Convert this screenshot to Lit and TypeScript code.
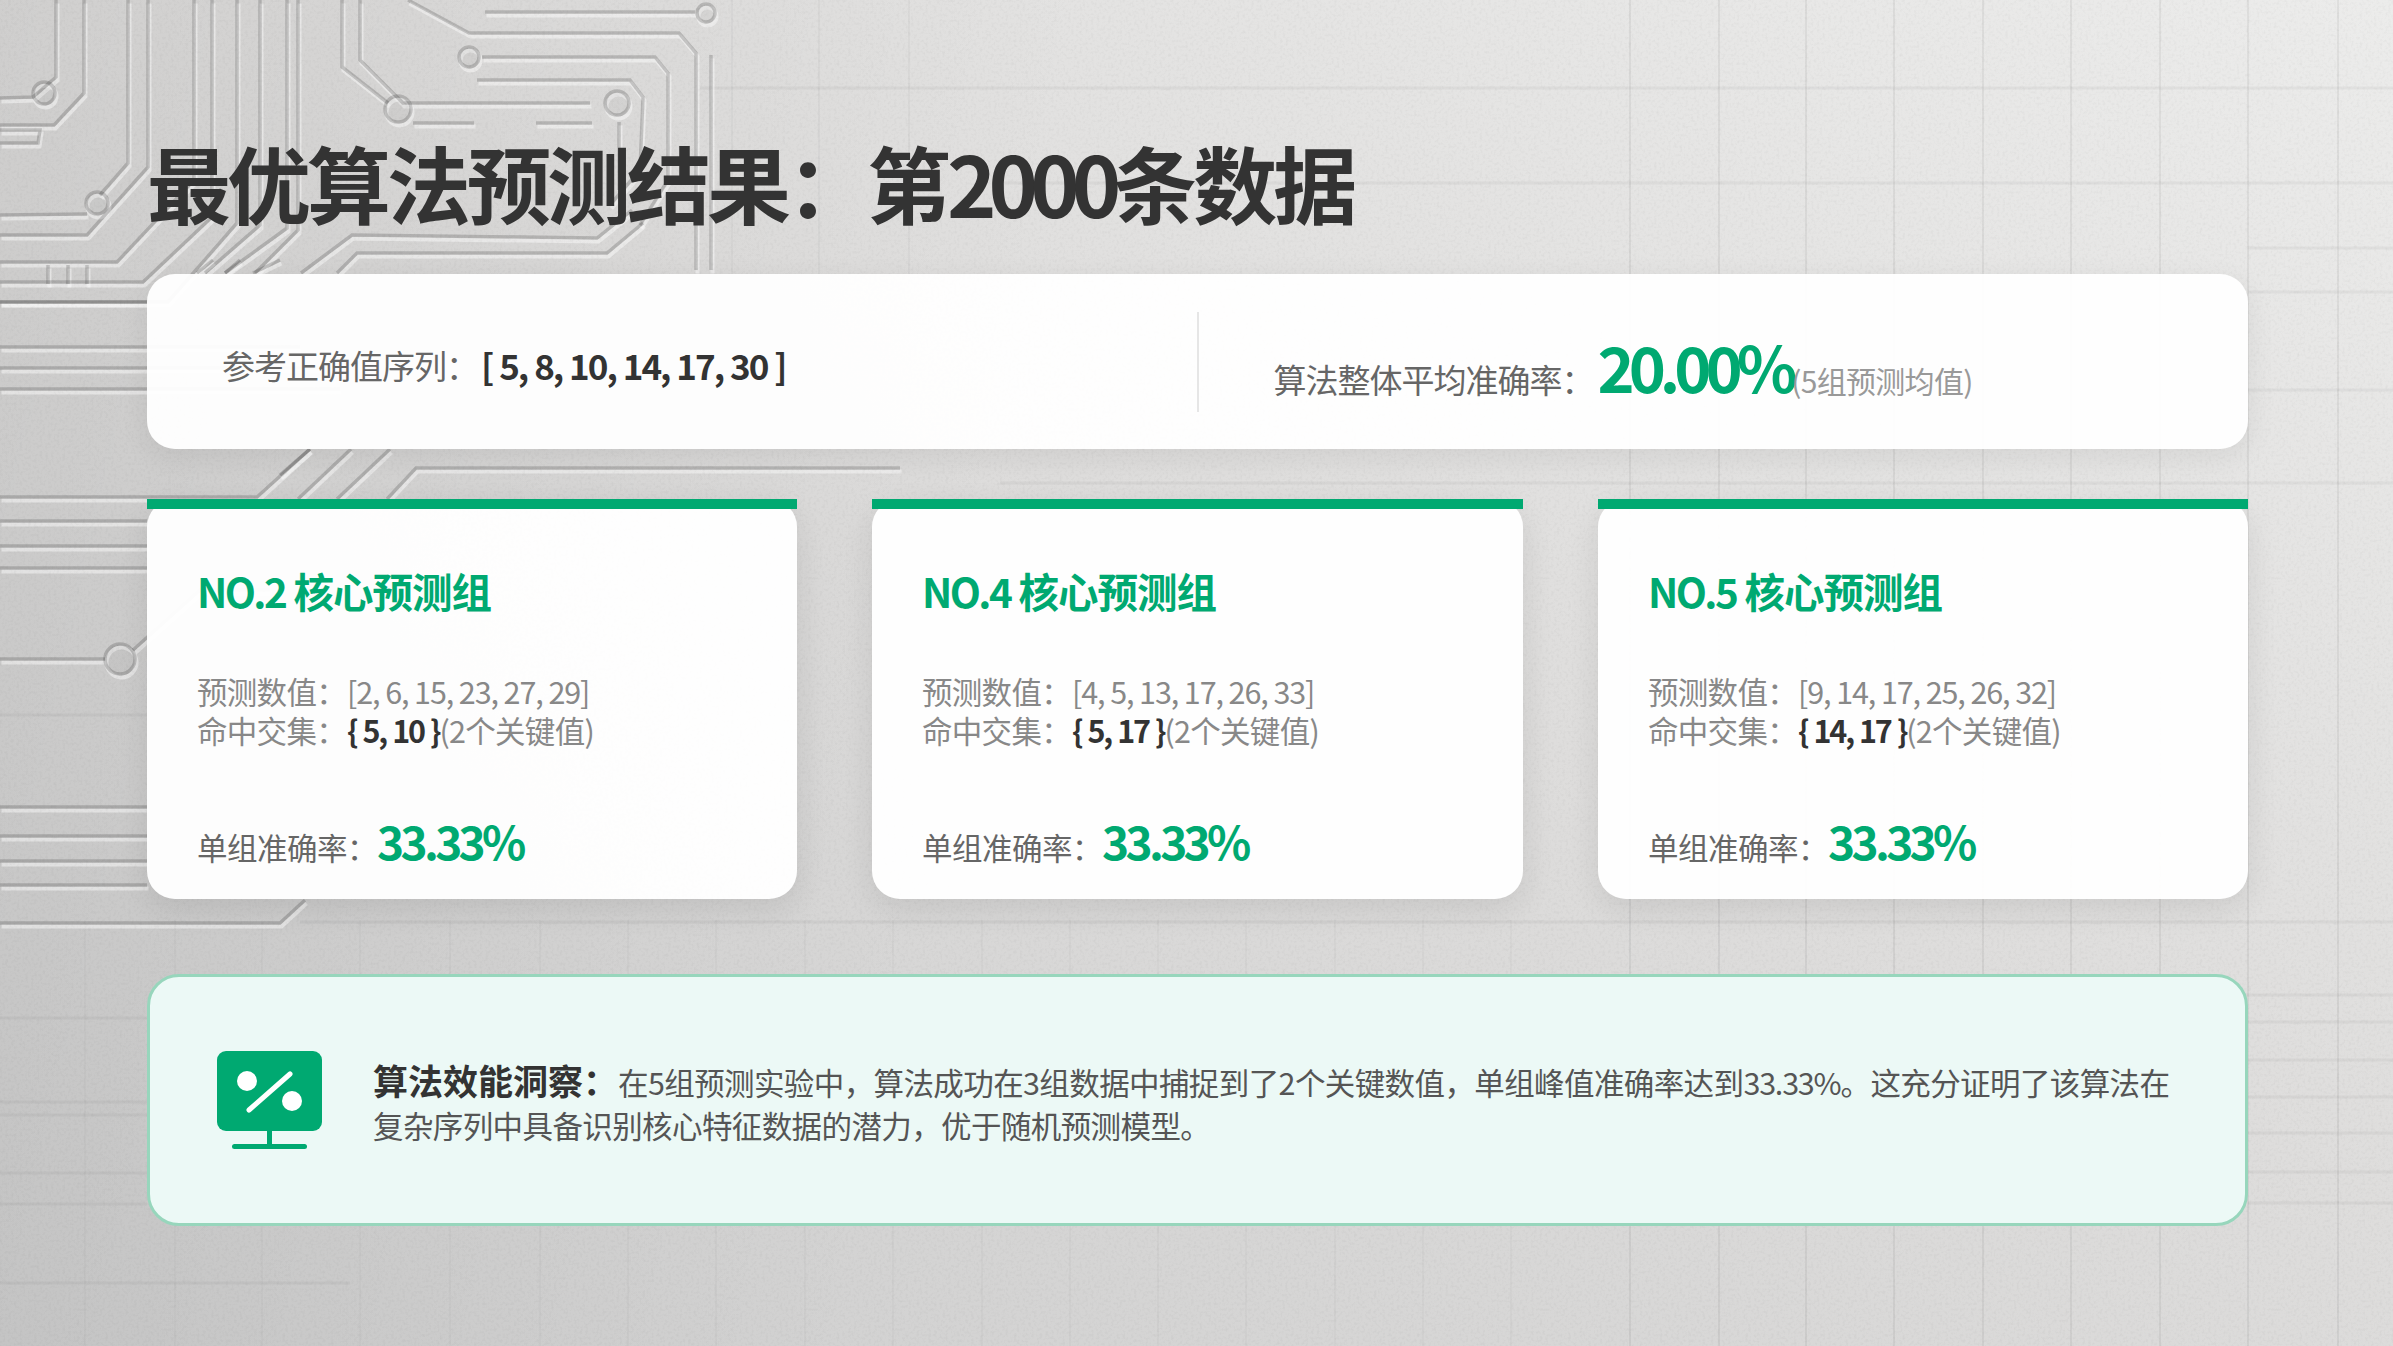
import { LitElement, html, css, svg } from "lit";
import { customElement } from "lit/decorators.js";

const traces: string[] = [
  "56,0 56,77 33,97 0,98", "84,0 84,93 54,125 0,125", "0,130 40,130 38,143 0,143",
  "128,0 128,163 100,195", "87,214 0,215", "148,0 148,167 87,235 0,235",
  "194,0 194,180 117,262 0,262", "212,0 212,217 143,282 0,282", "237,0 237,223 168,302 0,302",
  "260,0 260,225 205,273", "287,0 287,228 225,273", "298,0 298,230 255,273",
  "342,0 342,67 388,103", "360,0 360,60 403,103 590,103", "408,0 469,33 679,33 696,53 696,270",
  "485,12 695,12", "482,57 655,57 668,73 668,180 640,225", "477,80 630,80 643,97 640,170 610,205",
  "413,123 474,123", "536,123 592,123", "619,122 619,190",
  "301,273 352,235 597,238 632,210", "337,273 357,253 607,253 643,223", "711,55 711,270",
  "0,302 147,302", "0,347 300,347", "0,368 320,368", "0,389 340,389",
  "0,497 257,497 310,449", "0,521 147,521", "0,546 147,546", "0,568 147,568",
  "0,659 105,659", "133,650 200,590 270,590", "0,807 147,807", "0,836 147,836", "0,861 147,861", "0,885 147,885",
  "0,923 280,923 305,900", "280,475 310,449", "298,499 351,449", "337,499 390,449",
  "387,499 416,468 900,468", "197,273 213,260", "225,273 240,260", "253,273 280,260",
  "48,265 48,284", "68,265 68,284", "87,265 87,284",
];
const nodes: [number, number, number][] = [
  [44, 93, 11], [97, 203, 11], [398, 109, 13], [617, 103, 12], [469, 57, 10], [706, 13, 9], [120, 659, 15],
];
const strong: number[] = [1630, 1719, 1806, 1894, 1983, 2071, 2160, 2248, 2338];
const upper: number[] = [732, 819, 909];
const lower: number[] = [85, 175, 262, 360, 450, 540, 628, 716, 805, 893, 982, 1070, 1158, 1246, 1335, 1423, 1511];
const horizontal: [number, number, number][] = [
  [88, 700, 2393], [183, 1000, 2393], [248, 2248, 2393], [292, 2248, 2393], [390, 2248, 2393], [483, 1000, 2393],
  [715, 0, 147], [922, 300, 2393], [995, 1520, 2393], [1018, 0, 147], [1022, 2248, 2393], [1060, 2248, 2393],
  [1097, 2248, 2393], [1102, 0, 147], [1115, 0, 147], [1133, 2248, 2393], [1172, 2248, 2393], [1173, 0, 147],
  [1203, 2248, 2393], [1204, 0, 147], [1283, 0, 350],
];

const groups = [
  { no: "NO.2", pred: "[2, 6, 15, 23, 27, 29]", hit: "{ 5, 10 }" },
  { no: "NO.4", pred: "[4, 5, 13, 17, 26, 33]", hit: "{ 5, 17 }" },
  { no: "NO.5", pred: "[9, 14, 17, 25, 26, 32]", hit: "{ 14, 17 }" },
];

@customElement("app-root")
export class AppRoot extends LitElement {
  static styles = css`
    :host {
      display: block;
      position: relative;
      width: 2393px;
      height: 1346px;
      overflow: hidden;
      font-family: "Noto Sans CJK SC", "Noto Sans", sans-serif;
      background:
        linear-gradient(100deg, rgba(0, 0, 0, 0.06) 0%, rgba(0, 0, 0, 0) 42%),
        linear-gradient(to bottom left, #ececeb 0%, #dedddc 45%, #cdcdcd 100%);
    }
    .bg { position: absolute; inset: 0; width: 100%; height: 100%; }
    .page {
      position: relative;
      box-sizing: border-box;
      height: 100%;
      padding: 140px 145px 0 147px;
      display: flex;
      flex-direction: column;
    }
    h1 {
      margin: -4px 0 46px;
      font-size: 84px;
      line-height: 92px;
      font-weight: 700;
      letter-spacing: -4px;
      color: #333;
    }
    .tight { letter-spacing: -8px; }
    .summary {
      height: 175px;
      flex: none;
      display: grid;
      grid-template-columns: 1fr 1fr;
      align-items: center;
      background: rgba(255, 255, 255, 0.95);
      border-radius: 28px;
      box-shadow: 0 8px 30px rgba(0, 0, 0, 0.07);
      margin-bottom: 50px;
    }
    .cell { padding-left: 75px; display: flex; align-items: baseline; height: 100px; box-sizing: border-box; }
    .cell.left { align-items: center; padding-top: 6px; }
    .cell.right { border-left: 2px solid #e6e6e6; margin-left: -1px; padding-top: 16px; }
    .lab { font-size: 33px; letter-spacing: -1px; color: #666; }
    .seq { margin-left: 3px; font-size: 35px; font-weight: 700; letter-spacing: -2px; word-spacing: 1px; color: #333; white-space: pre; }
    .big { margin-left: 4px; font-size: 63px; font-weight: 700; letter-spacing: -6px; color: #00a971; line-height: 76px; }
    .note { font-size: 30px; letter-spacing: -0.7px; color: #999; }
    .cards {
      display: grid;
      grid-template-columns: 650px 651px 650px;
      justify-content: space-between;
      margin-bottom: 75px;
    }
    .card {
      position: relative;
      box-sizing: border-box;
      height: 400px;
      padding: 63px 50px 0;
      background: rgba(255, 255, 255, 0.96);
      border-radius: 28px;
      box-shadow: 0 10px 32px rgba(0, 0, 0, 0.09);
    }
    .card::before {
      content: "";
      position: absolute;
      left: 0; right: 0; top: 0;
      height: 10px;
      background: #00a971;
    }
    .name { font-size: 40.5px; line-height: 58px; font-weight: 700; letter-spacing: -1px; color: #00a971; }
    .name span { letter-spacing: -2.6px; }
    .vals { margin-top: 52px; font-size: 30.5px; line-height: 39px; letter-spacing: -0.7px; color: #888; }
    .vals i { font-style: normal; letter-spacing: -1.1px; margin-left: 1px; }
    .vals b { color: #333; font-weight: 700; letter-spacing: -2.2px; word-spacing: 1.5px; margin-left: 1px; }
    .rate { margin-top: 60px; display: flex; align-items: baseline; }
    .rate span { font-size: 30.5px; letter-spacing: -0.5px; color: #666; }
    .rate strong { font-size: 46px; font-weight: 700; letter-spacing: -3.7px; color: #00a971; line-height: 60px; }
    .insight {
      box-sizing: border-box;
      height: 252px;
      display: flex;
      align-items: center;
      gap: 51px;
      padding: 0 67px;
      background: #ecf9f6;
      border: 3px solid #97d6bc;
      border-radius: 32px;
    }
    .insight svg { flex: none; width: 105px; height: 98px; }
    .text { padding-top: 5px; font-size: 30.5px; line-height: 43px; letter-spacing: -0.6px; color: #555; }
    .text b { font-size: 35px; font-weight: 700; letter-spacing: 0; color: #333; }
    .text i { font-style: normal; letter-spacing: -1.2px; }
  `;

  render() {
    return html`
      <svg class="bg" viewBox="0 0 2393 1346" aria-hidden="true">
        <defs>
          <filter id="grain" x="0" y="0" width="100%" height="100%">
            <feTurbulence type="fractalNoise" baseFrequency="0.35" numOctaves="2" seed="4" />
            <feColorMatrix values="0 0 0 0 0  0 0 0 0 0  0 0 0 0 0  1.4 0 0 0 -0.6" />
          </filter>
          <filter id="soft"><feGaussianBlur stdDeviation="0.7" /></filter>
        </defs>
        ${strong.map((x) => svg`<line x1=${x} x2=${x} y1="0" y2="1346" stroke="#000" stroke-opacity="0.075" stroke-width="1.5" />`)}
        ${upper.map((x) => svg`<line x1=${x} x2=${x} y1="0" y2="275" stroke="#000" stroke-opacity="0.04" stroke-width="1.5" />`)}
        ${lower.map((x) => svg`<line x1=${x} x2=${x} y1="920" y2="1346" stroke="#000" stroke-opacity="0.02" stroke-width="2" />`)}
        ${horizontal.map(([y, a, b]) => svg`<line x1=${a} x2=${b} y1=${y} y2=${y} stroke="#000" stroke-opacity="0.04" stroke-width="3" />`)}
        <g filter="url(#soft)">
          <g fill="none" stroke="#fff" stroke-opacity="0.45" stroke-width="4" transform="translate(1.5 3.5)">
            ${traces.map((p) => svg`<polyline points=${p} />`)}
            ${nodes.map(([x, y, r]) => svg`<circle cx=${x} cy=${y} r=${r} />`)}
          </g>
          <g fill="none" stroke="#000" stroke-opacity="0.17" stroke-width="3.5">
            ${traces.map((p) => svg`<polyline points=${p} />`)}
            ${nodes.map(([x, y, r]) => svg`<circle cx=${x} cy=${y} r=${r} fill="#000" fill-opacity="0.03" />`)}
          </g>
        </g>
        <rect width="2393" height="1346" filter="url(#grain)" opacity="0.05" />
      </svg>
      <div class="page">
        <h1>最优算法预测结果：第<span class="tight">2000</span>条数据</h1>
        <section class="summary">
          <div class="cell left"><span class="lab">参考正确值序列：</span><span class="seq">[ 5, 8, 10, 14, 17, 30 ]</span></div>
          <div class="cell right"><span class="lab">算法整体平均准确率：</span><span class="big">20.00%</span><span class="note">(5组预测均值)</span></div>
        </section>
        <section class="cards">
          ${groups.map((g) => html`
            <article class="card">
              <div class="name"><span>${g.no}</span> 核心预测组</div>
              <div class="vals">
                <div>预测数值：<i>${g.pred}</i></div>
                <div>命中交集：<b>${g.hit}</b>(2个关键值)</div>
              </div>
              <div class="rate"><span>单组准确率：</span><strong>33.33%</strong></div>
            </article>`)}
        </section>
        <section class="insight">
          <svg viewBox="0 0 105 98">
            <rect width="105" height="80" rx="9" fill="#00a971" />
            <rect x="50" y="80" width="5" height="14" fill="#00a971" />
            <rect x="15" y="93" width="75" height="5" rx="2.5" fill="#00a971" />
            <ellipse cx="30" cy="30" rx="10" ry="10" fill="#fff" />
            <ellipse cx="75" cy="50" rx="10" ry="10" fill="#fff" />
            <line x1="32" y1="59" x2="73" y2="23" stroke="#fff" stroke-width="5" stroke-linecap="round" />
          </svg>
          <div class="text"><b>算法效能洞察：</b>在5组预测实验中，算法成功在3组数据中捕捉到了2个关键数值，单组峰值准确率达到<i>33.33%</i>。这充分证明了该算法在复杂序列中具备识别核心特征数据的潜力，优于随机预测模型。</div>
        </section>
      </div>
    `;
  }
}
